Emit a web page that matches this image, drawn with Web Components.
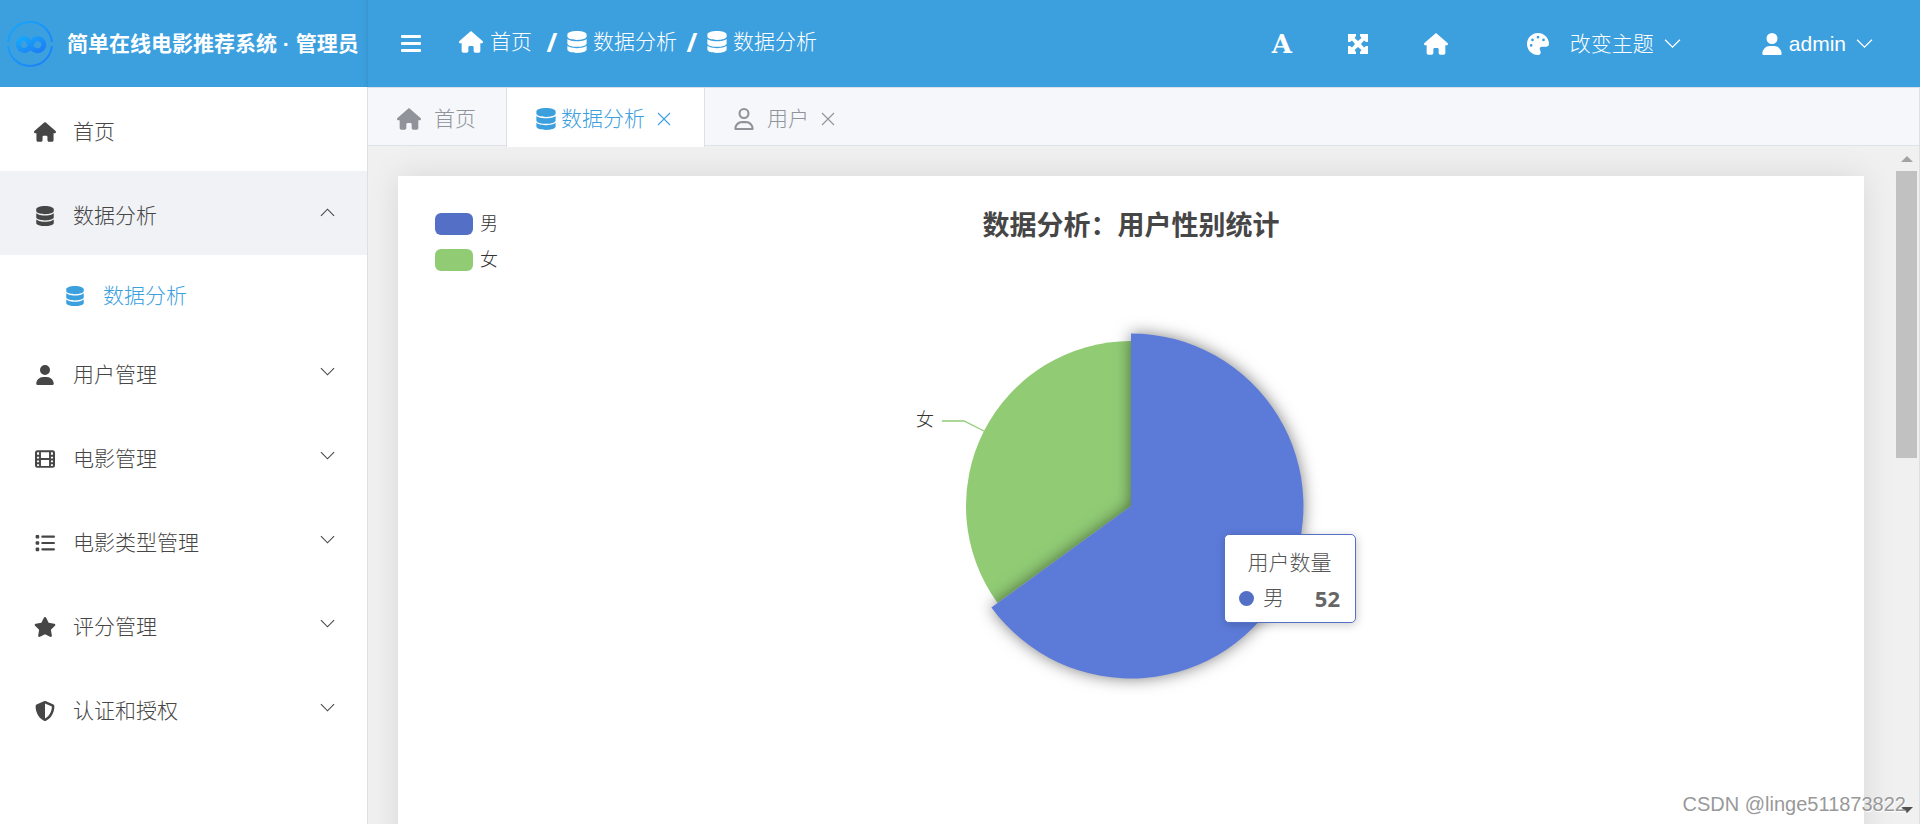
<!DOCTYPE html>
<html lang="zh-CN">
<head>
<meta charset="utf-8">
<title>简单在线电影推荐系统</title>
<style>
html, body { margin: 0; height: 100%; }
body { font: 21px/30px "Liberation Sans", "Noto Sans CJK SC", sans-serif; font-weight: 300; color: #333; background: #fff; overflow: hidden; }
</style>
</head>
<body>
<admin-shell></admin-shell>
<script>
const ICONS = {
  home: ['0 0 576 512', '<path d="M575.8 255.5c0 18-15 32.1-32 32.1h-32l.7 160.2c0 2.7-.2 5.4-.5 8.1V472c0 22.1-17.9 40-40 40H392c-22.1 0-40-17.9-40-40V384c0-17.7-14.3-32-32-32H256c-17.7 0-32 14.3-32 32v88c0 22.1-17.9 40-40 40H104c-22.1 0-40-17.9-40-40V287.6H32c-18 0-32-14-32-32.1c0-9 3-17 10-24L266.4 8c7-7 15-8 22-8s15 2 21 7L564.8 231.5c8 7 12 15 11 24z"/>'],
  database: ['0 0 448 512', '<path d="M448 80v48c0 44.2-100.3 80-224 80S0 172.2 0 128V80C0 35.8 100.3 0 224 0S448 35.8 448 80zM393.2 214.7c20.8-7.4 39.9-16.9 54.8-28.6V288c0 44.2-100.3 80-224 80S0 332.2 0 288V186.1c14.9 11.8 34 21.2 54.8 28.6C99.7 230.7 159.5 240 224 240s124.3-9.3 169.2-25.3zM0 346.1c14.9 11.8 34 21.2 54.8 28.6C99.7 390.7 159.5 400 224 400s124.3-9.3 169.2-25.3c20.8-7.4 39.9-16.9 54.8-28.6V432c0 44.2-100.3 80-224 80S0 476.2 0 432V346.1z"/>'],
  user: ['0 0 448 512', '<path d="M224 256A128 128 0 1 0 224 0a128 128 0 1 0 0 256zm-45.7 48C79.8 304 0 383.8 0 482.3C0 498.7 13.3 512 29.7 512H418.3c16.4 0 29.7-13.3 29.7-29.7C448 383.8 368.2 304 269.7 304H178.3z"/>'],
  userLine: ['0 0 448 512', '<path d="M304 128a80 80 0 1 0 -160 0 80 80 0 1 0 160 0zM96 128a128 128 0 1 1 256 0A128 128 0 1 1 96 128zM49.3 464H398.7c-8.9-63.3-63.3-112-129-112H178.3c-65.7 0-120.1 48.7-129 112zM0 482.3C0 383.8 79.8 304 178.3 304h91.4C368.2 304 448 383.8 448 482.3c0 16.4-13.3 29.7-29.7 29.7H29.7C13.3 512 0 498.7 0 482.3z"/>'],
  film: ['0 0 512 512', '<path fill-rule="evenodd" d="M64 32H448a64 64 0 0 1 64 64V416a64 64 0 0 1-64 64H64a64 64 0 0 1-64-64V96a64 64 0 0 1 64-64zM152 80V228H360V80zM152 284V432H360V284zM52 96V148H104V80H68a16 16 0 0 0-16 16zM52 196V244H104V196zM52 292V340H104V292zM52 388V416a16 16 0 0 0 16 16H104V388zM408 80V148H460V96a16 16 0 0 0-16-16zM408 196V244H460V196zM408 292V340H460V292zM408 388V432H444a16 16 0 0 0 16-16V388z"/>'],
  list: ['0 0 512 512', '<rect x="16" y="48" width="92" height="92" rx="24"/><rect x="16" y="210" width="92" height="92" rx="24"/><rect x="16" y="372" width="92" height="92" rx="24"/><rect x="160" y="66" width="352" height="56" rx="28"/><rect x="160" y="228" width="352" height="56" rx="28"/><rect x="160" y="390" width="352" height="56" rx="28"/>'],
  star: ['24 0 528 512', '<path d="M316.9 18C311.6 7 300.4 0 288.1 0s-23.4 7-28.8 18L195 150.3 51.4 171.5c-12 1.8-22 10.2-25.7 21.7s-.7 24.2 7.9 32.7L137.8 329 113.2 474.7c-2 12 3 24.2 12.9 31.3s23 8 33.8 2.3l128.3-68.5 128.3 68.5c10.8 5.7 23.9 4.9 33.8-2.3s14.9-19.3 12.9-31.3L438.5 329 542.7 225.9c8.6-8.5 11.7-21.2 7.9-32.7s-13.7-19.9-25.7-21.7L381.2 150.3 316.9 18z"/>'],
  shield: ['0 0 512 512', '<path d="M256 0c4.6 0 9.2 1 13.4 2.9L457.7 82.8c22 9.3 38.4 31 38.3 57.2c-.5 99.2-41.3 280.7-213.6 363.2c-16.7 8-36.1 8-52.8 0C57.3 420.7 16.5 239.2 16 140c-.1-26.2 16.3-47.9 38.3-57.2L242.7 2.9C246.8 1 251.4 0 256 0zm0 66.8V444.8C394 378 431.1 230.1 432 141.4L256 66.8z"/>'],
  palette: ['0 0 512 512', '<path d="M512 256c0 .9 0 1.8 0 2.7c-.4 36.5-33.6 61.3-70.1 61.3H344c-26.5 0-48 21.5-48 48c0 3.4 .4 6.7 1 9.9c2.1 10.2 6.5 20 10.8 29.9c6.1 13.8 12.1 27.5 12.1 42c0 31.8-21.6 60.7-53.4 62c-3.5 .1-7 .2-10.6 .2C114.6 512 0 397.4 0 256S114.6 0 256 0S512 114.6 512 256zM128 288a32 32 0 1 0 -64 0 32 32 0 1 0 64 0zm0-96a32 32 0 1 0 0-64 32 32 0 1 0 0 64zM288 96a32 32 0 1 0 -64 0 32 32 0 1 0 64 0zm96 96a32 32 0 1 0 0-64 32 32 0 1 0 0 64z"/>'],
  bars: ['0 0 20 20', '<rect y="1" width="20" height="3" rx="1"/><rect y="8" width="20" height="3" rx="1"/><rect y="15" width="20" height="3" rx="1"/>'],
  expand: ['0 0 20 20', '<path d="M0 0H8V2L6.5 4 10 7 13.5 4 12 2V0H20V8H18L16 6.5 13 10 16 13.5 18 12H20V20H12V18L13.5 16 10 13 6.5 16 8 18V20H0V12H2L4 13.5 7 10 4 6.5 2 8H0z"/>'],
  down: ['0 0 16 16', '<path d="M1 4.5 8 11.5 15 4.5" fill="none" stroke="currentColor" stroke-width="1.2"/>'],
  up: ['0 0 16 16', '<path d="M1 11.5 8 4.5 15 11.5" fill="none" stroke="currentColor" stroke-width="1.2"/>'],
  close: ['0 0 14 14', '<path d="M1 1 13 13M13 1 1 13" fill="none" stroke="currentColor" stroke-width="1.1"/>']
};

class UiIcon extends HTMLElement {
  connectedCallback() {
    const [box, shape] = ICONS[this.getAttribute('name')];
    this.attachShadow({ mode: 'open' }).innerHTML = `
      <style>:host{display:inline-block;flex:none;width:20px;height:20px}svg{display:block;width:100%;height:100%;fill:currentColor}</style>
      <svg viewBox="${box}" aria-hidden="true">${shape}</svg>`;
  }
}

class SiteBrand extends HTMLElement {
  connectedCallback() {
    this.attachShadow({ mode: 'open' }).innerHTML = `
      <style>
        :host{display:flex;align-items:center;gap:14px;padding-left:7px;background:#3ca0df;color:#fff;box-shadow:inset -6px 0 6px -6px #0002}
        svg{width:46px;height:46px;flex:none}
        h1{margin:0;font-size:21px;line-height:30px;font-weight:700;white-space:nowrap}
      </style>
      <svg viewBox="0 0 46 46" fill="none" aria-hidden="true">
        <defs><linearGradient id="g" x1="0" y1="0" x2="1" y2="1"><stop stop-color="#17a8fb"/><stop offset="1" stop-color="#1c7df5"/></linearGradient></defs>
        <path d="M1.1 21A22 22 0 0 1 44.9 21M44.9 25A22 22 0 0 1 1.1 25" stroke="url(#g)" stroke-width="2"/>
        <path d="M18.5 17.5A6 6 0 1 0 22 27L26 20A6 6 0 1 1 28 29C25 29 24 26 22 22C21 19 20 17.5 17 17.5" stroke="url(#g)" stroke-width="5"/>
      </svg>
      <h1>简单在线电影推荐系统 · 管理员</h1>`;
  }
}

class TopBar extends HTMLElement {
  connectedCallback() {
    this.attachShadow({ mode: 'open' }).innerHTML = `
      <style>
        :host{display:flex;align-items:center;justify-content:space-between;padding:0 47px 0 33px;background:#3ca0df;color:#fff}
        .left,.right,nav,a,button{display:flex;align-items:center}
        a,button{color:inherit;font:inherit;text-decoration:none;background:none;border:0;padding:0;white-space:nowrap}
        .left{gap:38px}
        nav{gap:9px;padding-bottom:4px}
        nav a{gap:6px}
        nav a:first-child{gap:7px;margin-right:5px}
        nav b{font:700 26px/30px "Noto Sans",sans-serif;width:12px;text-align:center}
        ui-icon.wide{width:24px;height:22px}
        ui-icon.db{width:20px;height:22px}
        .tools{display:flex;align-items:center;gap:56px;margin-right:79px}
        .font{font:700 26px/30px "DejaVu Serif",serif;width:20px;justify-content:center}
        .theme{gap:21px;margin-right:80px}
        ui-icon.mid{width:22px;height:22px}
        .label{display:flex;align-items:center;gap:10px}
        ui-icon.arrow{width:17px;height:17px}
        .account{gap:6px}
      </style>
      <div class="left">
        <button aria-label="折叠菜单"><ui-icon name="bars"></ui-icon></button>
        <nav aria-label="路径">
          <a href="#"><ui-icon class="wide" name="home"></ui-icon>首页</a><b>/</b>
          <a href="#"><ui-icon class="db" name="database"></ui-icon>数据分析</a><b>/</b>
          <a href="#"><ui-icon class="db" name="database"></ui-icon>数据分析</a>
        </nav>
      </div>
      <div class="right">
        <div class="tools">
          <button class="font">A</button>
          <button aria-label="全屏"><ui-icon name="expand"></ui-icon></button>
          <a href="#" aria-label="主页"><ui-icon class="wide" name="home"></ui-icon></a>
        </div>
        <button class="theme"><ui-icon class="mid" name="palette"></ui-icon><span class="label">改变主题<ui-icon class="arrow" name="down"></ui-icon></span></button>
        <button class="account"><ui-icon class="mid" name="user"></ui-icon><span class="label">admin<ui-icon class="arrow" name="down"></ui-icon></span></button>
      </div>`;
  }
}

class MenuItem extends HTMLElement {
  connectedCallback() {
    const arrow = this.getAttribute('arrow');
    this.attachShadow({ mode: 'open' }).innerHTML = `
      <style>
        :host{display:block}
        a{display:flex;align-items:center;height:84px;padding:0 32px 0 34px;color:#464646;text-decoration:none}
        :host([open]) a{background:#f0f2f6}
        :host([sub]) a{height:75px;padding-left:64px;color:#3ca0df}
        .text{display:flex;align-items:center;gap:17px;flex:1;padding-top:6px}
        .text ui-icon{width:22px}
        .arrow{width:15px;height:15px;margin-bottom:2px}
      </style>
      <a href="#"><span class="text"><ui-icon name="${this.getAttribute('icon')}"></ui-icon><slot></slot></span>${arrow ? `<ui-icon class="arrow" name="${arrow}"></ui-icon>` : ''}</a>`;
  }
}

class SideMenu extends HTMLElement {
  connectedCallback() {
    this.attachShadow({ mode: 'open' }).innerHTML = `
      <style>:host{display:block;background:#fff;border-right:1px solid #dcdfe6}</style>
      <nav aria-label="主菜单">
        <menu-item icon="home">首页</menu-item>
        <menu-item icon="database" arrow="up" open>数据分析</menu-item>
        <menu-item icon="database" sub>数据分析</menu-item>
        <menu-item icon="user" arrow="down">用户管理</menu-item>
        <menu-item icon="film" arrow="down">电影管理</menu-item>
        <menu-item icon="list" arrow="down">电影类型管理</menu-item>
        <menu-item icon="star" arrow="down">评分管理</menu-item>
        <menu-item icon="shield" arrow="down">认证和授权</menu-item>
      </nav>`;
  }
}

class TabStrip extends HTMLElement {
  connectedCallback() {
    this.attachShadow({ mode: 'open' }).innerHTML = `
      <style>
        :host{display:flex;height:57px;background:#f5f7fb;border-top:1px solid #dcdfe6;border-bottom:1px solid #e0e2ea;color:#909399}
        .tab{display:flex;align-items:center;padding:4px 29px 0;gap:12px}
        .first{padding-right:30px}
        .active{background:#fff;color:#3ca0df;border:solid #dcdfe6;border-width:0 1px;margin-bottom:-2px;padding:4px 33px 2px 29px;position:relative}
        a{display:flex;align-items:center;color:inherit;text-decoration:none;gap:13px}
        .active a{gap:5px}
        button{display:flex;border:0;background:none;padding:0;color:inherit}
        ui-icon{height:22px}
        .wide{width:24px}
        .close{width:14px;height:14px}
      </style>
      <div class="tab first"><a href="#"><ui-icon class="wide" name="home"></ui-icon>首页</a></div>
      <div class="tab active"><a href="#"><ui-icon name="database"></ui-icon>数据分析</a><button aria-label="关闭"><ui-icon class="close" name="close"></ui-icon></button></div>
      <div class="tab"><a href="#"><ui-icon name="userLine"></ui-icon>用户</a><button aria-label="关闭"><ui-icon class="close" name="close"></ui-icon></button></div>`;
  }
}

class ChartTip extends HTMLElement {
  connectedCallback() {
    this.attachShadow({ mode: 'open' }).innerHTML = `
      <style>
        :host{box-sizing:border-box;display:block;width:132px;padding:12px 15px 8px 14px;background:#fff;border:1px solid #5470c6;border-radius:5px;box-shadow:1px 2px 10px #0003;color:#555}
        .name{text-align:center;line-height:32px}
        .row{display:flex;align-items:center;line-height:32px;margin-top:3px}
        i{width:15px;height:15px;border-radius:50%;background:#5470c6;margin-right:9px}
        b{margin-left:auto;font:700 22px/32px "Noto Sans",sans-serif;color:#666}
      </style>
      <div class="name">用户数量</div>
      <div class="row"><i></i><span>男</span><b>52</b></div>`;
  }
}

class PieCard extends HTMLElement {
  connectedCallback() {
    this.attachShadow({ mode: 'open' }).innerHTML = `
      <style>
        :host{display:block;background:#fff;box-shadow:0 0 30px #0000001a;padding:30px 37px;min-height:700px}
        header{display:grid;grid-template-columns:1fr auto 1fr}
        ul{list-style:none;margin:0;padding:0}
        li{display:flex;align-items:center;gap:7px;font-size:18px;line-height:36px}
        li i{width:38px;height:22px;border-radius:6px;background:#5470c6}
        li + li i{background:#91cc75}
        h2{margin:0;font-size:27px;line-height:40px;font-weight:700;color:#464646}
        .plot{position:relative;width:460px;margin:0 auto}
        svg{display:block;width:460px;height:440px;overflow:visible}
        text{font-size:18px;fill:#333}
        .blue{filter:drop-shadow(0 0 8px #00000080)}
        chart-tip{position:absolute;left:323px;top:256px}
      </style>
      <header>
        <ul><li><i></i>男</li><li><i></i>女</li></ul>
        <h2>数据分析：用户性别统计</h2>
      </header>
      <div class="plot">
        <svg viewBox="0 0 460 440" role="img" aria-label="用户性别统计">
          <path d="M230 228V63A165 165 0 0 0 96.5 325z" fill="#91cc75"/>
          <path d="M83 153 63 143H41" fill="none" stroke="#91cc75" stroke-width="1.3"/>
          <text x="15" y="148">女</text>
          <path class="blue" d="M230 228V55.5A172.5 172.5 0 1 1 90.4 329.4z" fill="#5c7bd9"/>
        </svg>
        <chart-tip></chart-tip>
      </div>`;
  }
}

class ScrollTrack extends HTMLElement {
  connectedCallback() {
    this.attachShadow({ mode: 'open' }).innerHTML = `
      <style>
        :host{display:flex;flex-direction:column;align-items:center;width:21px;padding:10px 2px 11px 1px}
        .thumb{width:21px;height:287px;background:#c1c1c1;margin-top:9px}
        .up,.down{border:6px solid transparent}
        .up{border-top:0;border-bottom-color:#a3a3a3}
        .down{border-bottom:0;border-top-color:#505050;margin-top:auto}
      </style>
      <div class="up"></div><div class="thumb"></div><div class="down"></div>`;
  }
}

class AdminShell extends HTMLElement {
  connectedCallback() {
    this.attachShadow({ mode: 'open' }).innerHTML = `
      <style>
        :host{position:relative;display:grid;grid-template:87px minmax(0,1fr) / 368px minmax(0,1fr);height:100vh;overflow:hidden}
        main{display:flex;flex-direction:column;min-height:0;border-right:1px solid #dcdfe6}
        .view{flex:1;min-height:0;display:flex;background:#f0f0f0;overflow:hidden}
        .page{flex:1;padding:30px 31px 0 30px}
        .mark{position:absolute;right:14px;bottom:5px;font-size:20px;color:#999;text-shadow:1px 1px 1px #fff}
      </style>
      <site-brand></site-brand>
      <top-bar></top-bar>
      <side-menu></side-menu>
      <main>
        <tab-strip></tab-strip>
        <div class="view"><div class="page"><pie-card></pie-card></div><scroll-track></scroll-track></div>
      </main>
      <span class="mark">CSDN @linge511873822</span>`;
  }
}

customElements.define('ui-icon', UiIcon);
customElements.define('site-brand', SiteBrand);
customElements.define('top-bar', TopBar);
customElements.define('menu-item', MenuItem);
customElements.define('side-menu', SideMenu);
customElements.define('tab-strip', TabStrip);
customElements.define('chart-tip', ChartTip);
customElements.define('pie-card', PieCard);
customElements.define('scroll-track', ScrollTrack);
customElements.define('admin-shell', AdminShell);
</script>
</body>
</html>
